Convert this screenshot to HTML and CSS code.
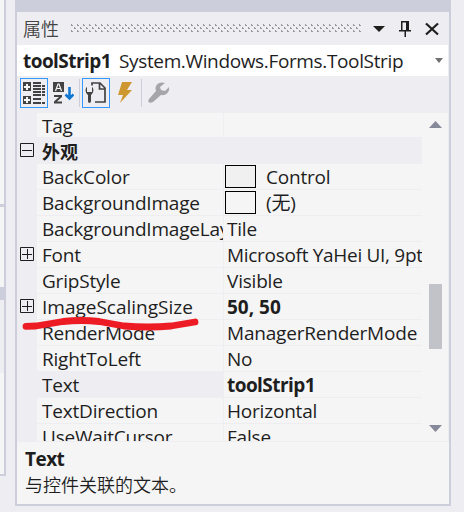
FILE: index.html
```html
<!DOCTYPE html>
<html lang="zh-CN">
<head>
<meta charset="utf-8">
<title>属性</title>
<link rel="stylesheet" href="styles.css">
</head>
<body>
<div class="workspace">
  <div class="neighbor">
    <div class="n-top"></div><div class="n-line"></div><div class="n-mid"></div><div class="n-band"></div><div class="n-gap"></div><div class="n-bottom"></div>
  </div>
  <section class="panel">
    <div class="tabstrip"></div>
    <header class="titlebar">
      <span class="title">属性</span>
      <span class="grip"></span>
      <svg class="title-icons" width="72" height="20" viewBox="0 0 72 20">
        <path d="M1 7h12l-6 6z" fill="#1e1e1e"/>
        <path d="M29 2h8v9h2v1.500h-5V18h-1.500v-5.500H27V11h2zM30.500 3.500V11H34V3.500z" fill="#1e1e1e" fill-rule="evenodd"/>
        <path d="M54 4.500l12 11M66 4.500l-12 11" stroke="#1e1e1e" stroke-width="2.200" fill="none"/>
      </svg>
    </header>
    <div class="selector">
      <b class="obj">toolStrip1</b><span class="type">System.Windows.Forms.ToolStrip</span>
      <svg class="drop" width="8" height="5" viewBox="0 0 8 5"><path d="M0 0h8L4 5z" fill="#717171"/></svg>
    </div>
    <div class="toolbar">
      <span class="tool on"><svg width="24" height="24" viewBox="0 0 24 24" shape-rendering="crispEdges">
        <path d="M1 1h8v9H1zM1 15h8v8H1z" fill="#424242"/><path d="M4 3h2v2h2v2H6v2H4V7H2V5h2zM4 16h2v2h2v2H6v2H4v-2H2v-2h2z" fill="#f6f6f6"/>
        <path d="M11 1h8v2h-8zM11 4h8v2h-8zM11 7h8v2h-8zM11 10h8v2h-8zM11 13h8v2h-8zM11 17h8v2h-8zM11 21h8v2h-8zM20 4h3v2h-3zM20 7h3v2h-3zM20 10h3v2h-3zM20 13h3v2h-3zM20 21h3v2h-3z" fill="#424242"/>
      </svg></span>
      <span class="tool sort"><svg width="22" height="24" viewBox="0 0 22 24">
        <path d="M1 1h11v10H1zM2 14h8v2l-5 4.500h5v2H2v-2L7 16H2z" fill="#424242"/><path d="M3.500 10L6 3h1l2.500 7M4.500 7.500h4" fill="none" stroke="#f6f6f6" stroke-width="1.200"/>
        <path d="M17.500 6v11M13.500 13.500l4 4 4-4" fill="none" stroke="#1177d1" stroke-width="2.600"/>
      </svg></span>
      <i class="sep"></i>
      <span class="tool on"><svg width="24" height="24" viewBox="0 0 24 24">
        <path d="M8 4.500V2h8l5 5v14H11M15.500 2v6H21" fill="none" stroke="#424242" stroke-width="1.700"/>
        <path d="M3 6C1 7 1 12 4 14v6c0 2.500 3 2.500 3 0v-6c3-2 3-7 1-8v5H3z" fill="#424242"/>
      </svg></span>
      <span class="tool bolt"><svg width="20" height="24" viewBox="0 0 20 24"><path d="M7 1h10l-5 8h5L5 22l3-8H3z" fill="#ce972f"/></svg></span>
      <i class="sep sep2"></i>
      <span class="tool wrench"><svg width="24" height="24" viewBox="0 0 24 24"><path d="M18 2c-6-2-11 2-9 8l-7 8c-2 3 1 5 4 3l8-7c5 1 9-3 8-8l-4 4-4-1-1-3z" fill="#a6a6aa"/></svg></span>
    </div>
    <div class="grid-area">
      <div class="grid">
        <div class="row"><i class="gut"></i><span class="name">Tag</span><span class="val"></span></div>
        <div class="row cat"><i class="gut"><svg width="14" height="14"><path d="M.5.5h13v13H.5zM2 7.500h10" fill="none" stroke="#1e1e1e"/></svg></i><b class="name">外观</b></div>
        <div class="row"><i class="gut"></i><span class="name">BackColor</span><span class="val"><i class="swatch control"></i>Control</span></div>
        <div class="row"><i class="gut"></i><span class="name">BackgroundImage</span><span class="val"><i class="swatch"></i>(无)</span></div>
        <div class="row"><i class="gut"></i><span class="name">BackgroundImageLay</span><span class="val">Tile</span></div>
        <div class="row"><i class="gut"><svg width="14" height="14"><path d="M.5.5h13v13H.5zM2 7.500h10M7.500 2v10" fill="none" stroke="#1e1e1e"/></svg></i><span class="name">Font</span><span class="val font-value">Microsoft YaHei UI, 9pt</span></div>
        <div class="row"><i class="gut"></i><span class="name">GripStyle</span><span class="val">Visible</span></div>
        <div class="row"><i class="gut"><svg width="14" height="14"><path d="M.5.5h13v13H.5zM2 7.500h10M7.500 2v10" fill="none" stroke="#1e1e1e"/></svg></i><span class="name size-name">ImageScalingSize</span><b class="val size-value">50, 50</b></div>
        <div class="row"><i class="gut"></i><span class="name">RenderMode</span><span class="val">ManagerRenderMode</span></div>
        <div class="row"><i class="gut"></i><span class="name">RightToLeft</span><span class="val">No</span></div>
        <div class="row selected"><i class="gut"></i><span class="name">Text</span><b class="val">toolStrip1</b></div>
        <div class="row"><i class="gut"></i><span class="name">TextDirection</span><span class="val">Horizontal</span></div>
        <div class="row"><i class="gut"></i><span class="name">UseWaitCursor</span><span class="val">False</span></div>
      </div>
      <div class="scroll">
        <svg width="13" height="7"><path d="M6.500 0L13 7H0z" fill="#868999"/></svg>
        <i class="thumb"></i>
        <svg class="down" width="13" height="7"><path d="M0 0h13L6.500 7z" fill="#868999"/></svg>
      </div>
      <svg class="marker" width="180" height="20" viewBox="0 0 180 20"><path d="M4 12.300L14 12 41 7.500q18-2 36 0l25 4.500q24 2 47 0L173 8" fill="none" stroke="#ed1c24" stroke-width="6.800" stroke-linecap="round" stroke-linejoin="round"/></svg>
    </div>
    <footer class="help"><b>Text</b><span>与控件关联的文本。</span></footer>
  </section>
</div>
</body>
</html>
```
FILE: styles.css
```css
* { box-sizing: border-box; }
body { margin: 0; background: #eeeef2; color: #1e1e1e; font: 19px/26px "Open Sans", "Noto Sans CJK SC", sans-serif; letter-spacing: -.2px; overflow: hidden; }
svg { display: block; flex: none; }
b { letter-spacing: -.55px; }
.workspace { display: flex; height: 512px; }
.neighbor { width: 6px; height: 476px; margin-right: 9px; border-right: 2px solid #cccedb; border-bottom: 2px solid #cccedb; }
.n-top { height: 204px; background: #f5f5f5; }
.n-line { height: 3px; background: #cccedb; }
.n-mid { height: 80px; background: #f5f5f5; }
.n-band { height: 13px; background: #cccedb; }
.n-gap { height: 73px; }
.n-bottom { height: 101px; background: #f5f5f5; }
.panel { width: 436px; height: 506px; border: solid #cccedb; border-width: 0 2px 2px; display: flex; flex-direction: column; }
.panel > * { flex: none; }
.tabstrip { height: 12px; background: #cccedb; }
.titlebar { height: 33px; padding-left: 6px; display: flex; align-items: center; color: #444; font-size: 18px; }
.title { width: 48px; font-weight: 350; letter-spacing: 0; }
.grip {
  flex: 1;
  height: 8px;
  margin: -1px 10px 0 0;
  background: conic-gradient(from 270deg at 1.5px 1.5px, #999 90deg, transparent 0) 0 0 / 6px 6px, conic-gradient(from 270deg at 1.5px 1.5px, #999 90deg, transparent 0) 3px 3px / 6px 6px;
}
.title-icons { margin-right: 5px; }
.selector { height: 31px; margin-right: 1px; background: #fff; display: flex; align-items: center; padding-left: 6px; }
.obj { width: 95px; }
.type { flex: 1; white-space: nowrap; letter-spacing: -.36px; padding-left: 1px; }
.drop { margin-right: 5px; }
.toolbar { height: 37px; padding: 2px 0 5px 3px; display: flex; align-items: center; }
.tool { height: 30px; display: flex; align-items: center; justify-content: center; }
.on { width: 28px; border: 1px solid #3399ff; }
.sort { width: 30px; }
.sep { width: 1px; height: 28px; background: #cccedb; margin: 0 2px 0 1px; }
.bolt { width: 30px; }
.sep2 { margin: 0 4px 0 1px; }
.wrench { width: 26px; }
.grid-area { position: relative; display: flex; height: 328px; }
.grid { width: 405px; overflow: hidden; }
.row { display: flex; height: 26px; white-space: nowrap; }
.row:first-child { height: 25px; }
.row:first-child .name { line-height: 26px; }
.gut { width: 20px; flex: none; padding: 5px 0 0 3px; }
.name, .val { overflow: hidden; background: #f5f5f5; border-bottom: 1px solid #eeeef2; line-height: 27px; }
.name { width: 187px; padding-left: 5px; border-right: 1px solid #eeeef2; }
.val { flex: 1; padding-left: 3px; display: flex; }
.row.cat { height: 26px; }
.cat .name { background: none; border: 0; flex: 1; font-size: 18px; line-height: 28px; letter-spacing: 0; }
.font-value { letter-spacing: -.3px; }
.size-name, .size-value { letter-spacing: 0; }
.selected .name { background: #eeeef2; }
.swatch { width: 31px; height: 23px; margin: 1px 10px 0 -2px; border: 1px solid #000; flex: none; }
.control { background: #f0f0f0; }
.scroll { width: 26px; background: #f5f5f5; padding: 8px 0 0 7px; }
.thumb { display: block; width: 13px; height: 65px; background: #c2c3c9; margin-top: 156px; }
.down { margin-top: 76px; }
.marker { position: absolute; left: 5px; top: 201px; }
.help { height: 63px; background: #f5f5f5; border-top: 1px solid #eeeef2; padding: 4px 8px 0; display: flex; flex-direction: column; line-height: 26px; }
.help span { font-size: 18px; font-weight: 350; letter-spacing: 0; }
```
